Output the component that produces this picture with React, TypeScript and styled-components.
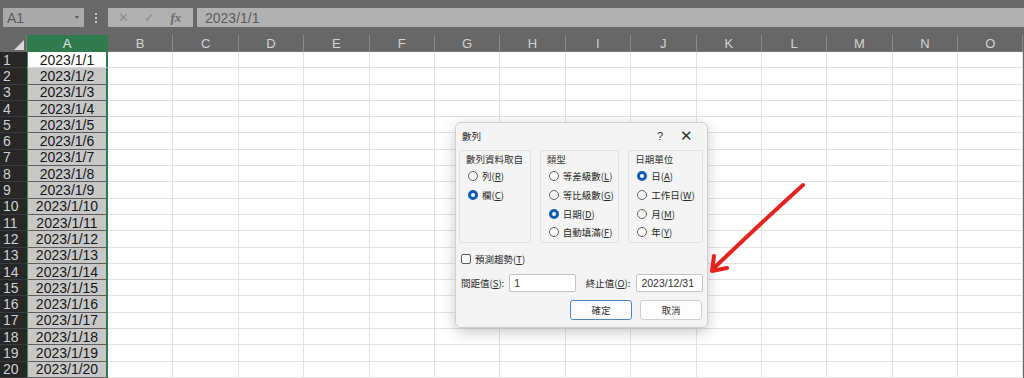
import { Fragment } from 'react';
import styled, { createGlobalStyle } from 'styled-components';

const GlobalStyle = createGlobalStyle`
  html, body {
    margin: 0;
    padding: 0;
    background: #686868;
  }
  * {
    box-sizing: border-box;
  }
`;

const COLS = ['A', 'B', 'C', 'D', 'E', 'F', 'G', 'H', 'I', 'J', 'K', 'L', 'M', 'N', 'O'];
const ROWS = Array.from({ length: 20 }, (_, i) => i + 1);

const Screen = styled.div`
  position: relative;
  width: 1024px;
  height: 378px;
  overflow: hidden;
  background: #686868;
  display: flex;
  flex-direction: column;
  font-family: 'Liberation Sans', Arial, sans-serif;
`;

const TopStrip = styled.div`
  height: 8px;
  background: #6a6a6a;
`;

const FormulaBar = styled.div`
  height: 19px;
  display: flex;
  align-items: stretch;
  padding-left: 3px;
`;

const NameBox = styled.div`
  width: 81px;
  background: #a9a9a9;
  display: flex;
  align-items: center;
  justify-content: space-between;
  padding: 0 5px 0 4px;
  color: #5a5a5a;
  font-size: 14px;
`;

const DropArrow = styled.span`
  width: 0;
  height: 0;
  border-left: 2.5px solid transparent;
  border-right: 2.5px solid transparent;
  border-top: 3px solid #555;
`;

const Dots = styled.div`
  width: 24px;
  display: flex;
  flex-direction: column;
  align-items: center;
  justify-content: center;
  gap: 2px;
  span {
    width: 2px;
    height: 2px;
    background: #c8c8c8;
  }
`;

const FuncBox = styled.div`
  width: 85px;
  background: #b1b1b1;
  display: flex;
  align-items: center;
  justify-content: space-around;
  padding: 0 4px 0 2px;
  color: #8c8c8c;
  font-size: 13px;
`;

const FxText = styled.span`
  font-family: 'Liberation Serif', serif;
  font-style: italic;
  font-weight: bold;
  color: #6a6a6a;
  font-size: 13px;
`;

const FormulaInput = styled.div`
  flex: 1;
  margin-left: 4px;
  background: #b1b1b1;
  display: flex;
  align-items: center;
  padding-left: 8px;
  color: #5c5c5c;
  font-size: 14px;
`;

const Spacer = styled.div`
  height: 8px;
`;

const Sheet = styled.div`
  display: grid;
  grid-template-columns: 27px 81px repeat(14, 65.4px);
  grid-template-rows: 17px repeat(20, 16.3px);
`;

const Corner = styled.div`
  background: #676767;
  position: relative;
  border-right: 1px solid #7a7a7a;
  &::after {
    content: '';
    position: absolute;
    right: 2px;
    bottom: 2px;
    width: 0;
    height: 0;
    border-left: 10px solid transparent;
    border-bottom: 10px solid #d9d9d9;
  }
`;

const ColHead = styled.div<{ $active?: boolean }>`
  background: ${(p) => (p.$active ? '#2f7b4e' : '#676767')};
  color: ${(p) => (p.$active ? '#e6e6e6' : '#d2d2d2')};
  font-size: 13px;
  display: flex;
  align-items: center;
  justify-content: center;
  border-right: 1px solid ${(p) => (p.$active ? '#2f7b4e' : '#8a8a8a')};
  border-bottom: 1px solid ${(p) => (p.$active ? '#2f7b4e' : '#777')};
`;

const RowHead = styled.div`
  background: #272727;
  color: #d0d0d0;
  font-size: 14px;
  display: flex;
  align-items: center;
  padding-left: 3px;
  border-bottom: 1px solid #3a3a3a;
`;

const SelCell = styled.div<{ $active?: boolean }>`
  background: ${(p) => (p.$active ? '#ffffff' : '#c7c7c7')};
  color: #161616;
  font-size: 14px;
  display: flex;
  align-items: center;
  justify-content: center;
  border-left: 1px solid #3b8a5c;
  border-right: 2px solid #2f7b4e;
  border-bottom: 1px solid ${(p) => (p.$active ? '#dadada' : '#5e5e5e')};
  line-height: 1;
`;

const Cell = styled.div`
  background: #ffffff;
  border-right: 1px solid #e2e2e2;
  border-bottom: 1px solid #e2e2e2;
`;

/* dialog */

const Dialog = styled.div`
  position: absolute;
  left: 455px;
  top: 122px;
  width: 253px;
  height: 206px;
  background: #f4f4f4;
  border: 1px solid #cfcfcf;
  border-radius: 6px;
  box-shadow: 0 4px 14px rgba(0, 0, 0, 0.22);
  display: flex;
  flex-direction: column;
  font-family: 'Noto Sans CJK TC', 'Noto Sans', sans-serif;
  font-size: 9.5px;
  color: #2a2a2a;
`;

const TitleBar = styled.div`
  height: 25px;
  display: flex;
  align-items: center;
  padding: 0 12px 0 6px;
`;

const Title = styled.span`
  flex: 1;
`;

const TitleButton = styled.span<{ $wide?: boolean }>`
  width: ${(p) => (p.$wide ? '18px' : '34px')};
  text-align: center;
  font-family: 'Liberation Sans', sans-serif;
  font-size: ${(p) => (p.$wide ? '15px' : '11px')};
  color: #333;
`;

const Groups = styled.div`
  display: flex;
  gap: 9px;
  padding: 2px 4px 0 3px;
`;

const Group = styled.div<{ $w: number }>`
  width: ${(p) => p.$w}px;
  height: 93px;
  border: 1px solid #e2e2e2;
  border-radius: 3px;
  padding: 1px 0 0 6px;
  display: flex;
  flex-direction: column;
`;

const Legend = styled.div`
  height: 14px;
  line-height: 14px;
  margin-bottom: 1px;
  color: #333;
`;

const RadioRow = styled.div`
  height: 18.7px;
  display: flex;
  align-items: center;
  gap: 4px;
  padding-left: 2px;
  white-space: nowrap;
  u {
    text-underline-offset: 1px;
  }
`;

const Radio = styled.span<{ $on?: boolean }>`
  width: 10px;
  height: 10px;
  border-radius: 50%;
  flex: none;
  background: ${(p) => (p.$on ? '#fff' : '#fafafa')};
  border: ${(p) => (p.$on ? '3px solid #0f5cb0' : '1px solid #606060')};
`;

const CheckRow = styled.div`
  display: flex;
  align-items: center;
  gap: 4px;
  padding: 9px 0 0 5px;
  height: 23px;
`;

const CheckBox = styled.span`
  width: 10px;
  height: 10px;
  border: 1px solid #5a5a5a;
  border-radius: 2px;
  background: #fbfbfb;
`;

const InputRow = styled.div`
  display: flex;
  align-items: center;
  padding: 8px 4px 0 5px;
  height: 26px;
`;

const FieldLabel = styled.span<{ $gap: number }>`
  margin-right: ${(p) => p.$gap}px;
  white-space: nowrap;
`;

const TextInput = styled.div<{ $after?: number }>`
  width: 67px;
  height: 18px;
  background: #fff;
  border: 1px solid #c4c4c4;
  border-radius: 2px;
  font-family: 'Liberation Sans', sans-serif;
  font-size: 10.5px;
  color: #333;
  display: flex;
  align-items: center;
  padding-left: 4px;
  margin-right: ${(p) => p.$after ?? 0}px;
`;

const ButtonRow = styled.div`
  display: flex;
  justify-content: flex-end;
  gap: 8px;
  padding: 8px 5px 0 0;
`;

const Button = styled.div<{ $primary?: boolean }>`
  width: 62px;
  height: 20px;
  background: #fdfdfd;
  border: 1px solid ${(p) => (p.$primary ? '#4f86c6' : '#d0d0d0')};
  border-radius: 3px;
  display: flex;
  align-items: center;
  justify-content: center;
  color: #333;
`;

const Arrow = styled.svg`
  position: absolute;
  left: 700px;
  top: 175px;
`;

type Opt = { text: string; key: string; on?: boolean };

const groups: { title: string; w: number; items: Opt[] }[] = [
  {
    title: '數列資料取自',
    w: 73,
    items: [
      { text: '列', key: 'R' },
      { text: '欄', key: 'C', on: true },
    ],
  },
  {
    title: '類型',
    w: 81,
    items: [
      { text: '等差級數', key: 'L' },
      { text: '等比級數', key: 'G' },
      { text: '日期', key: 'D', on: true },
      { text: '自動填滿', key: 'F' },
    ],
  },
  {
    title: '日期單位',
    w: 76,
    items: [
      { text: '日', key: 'A', on: true },
      { text: '工作日', key: 'W' },
      { text: '月', key: 'M' },
      { text: '年', key: 'Y' },
    ],
  },
];

const App = () => {
  return (
    <Screen>
      <GlobalStyle />
      <TopStrip />
      <FormulaBar>
        <NameBox>
          A1
          <DropArrow />
        </NameBox>
        <Dots>
          <span />
          <span />
          <span />
        </Dots>
        <FuncBox>
          <span>✕</span>
          <span>✓</span>
          <FxText>fx</FxText>
        </FuncBox>
        <FormulaInput>2023/1/1</FormulaInput>
      </FormulaBar>
      <Spacer />
      <Sheet>
        <Corner />
        {COLS.map((c) => (
          <ColHead key={c} $active={c === 'A'}>
            {c}
          </ColHead>
        ))}
        {ROWS.map((r) => (
          <Fragment key={r}>
            <RowHead>{r}</RowHead>
            <SelCell $active={r === 1}>2023/1/{r}</SelCell>
            {COLS.slice(1).map((c) => (
              <Cell key={c} />
            ))}
          </Fragment>
        ))}
      </Sheet>

      <Dialog>
        <TitleBar>
          <Title>數列</Title>
          <TitleButton>?</TitleButton>
          <TitleButton $wide>✕</TitleButton>
        </TitleBar>
        <Groups>
          {groups.map((g) => (
            <Group key={g.title} $w={g.w}>
              <Legend>{g.title}</Legend>
              {g.items.map((it) => (
                <RadioRow key={it.key}>
                  <Radio $on={it.on} />
                  <span>
                    {it.text}(<u>{it.key}</u>)
                  </span>
                </RadioRow>
              ))}
            </Group>
          ))}
        </Groups>
        <CheckRow>
          <CheckBox />
          <span>
            預測趨勢(<u>T</u>)
          </span>
        </CheckRow>
        <InputRow>
          <FieldLabel $gap={5}>
            間距值(<u>S</u>):
          </FieldLabel>
          <TextInput $after={10}>1</TextInput>
          <FieldLabel $gap={6}>
            終止值(<u>O</u>):
          </FieldLabel>
          <TextInput>2023/12/31</TextInput>
        </InputRow>
        <ButtonRow>
          <Button $primary>確定</Button>
          <Button>取消</Button>
        </ButtonRow>
      </Dialog>

      <Arrow width="120" height="110" viewBox="700 175 120 110">
        <path
          d="M 803 185 Q 762 222 714 268"
          fill="none"
          stroke="#e2231f"
          strokeWidth="4"
          strokeLinecap="round"
        />
        <path
          d="M 714 256 L 712 271 L 727 268"
          fill="none"
          stroke="#e2231f"
          strokeWidth="4"
          strokeLinecap="round"
          strokeLinejoin="round"
        />
      </Arrow>
    </Screen>
  );
};

export default App;
